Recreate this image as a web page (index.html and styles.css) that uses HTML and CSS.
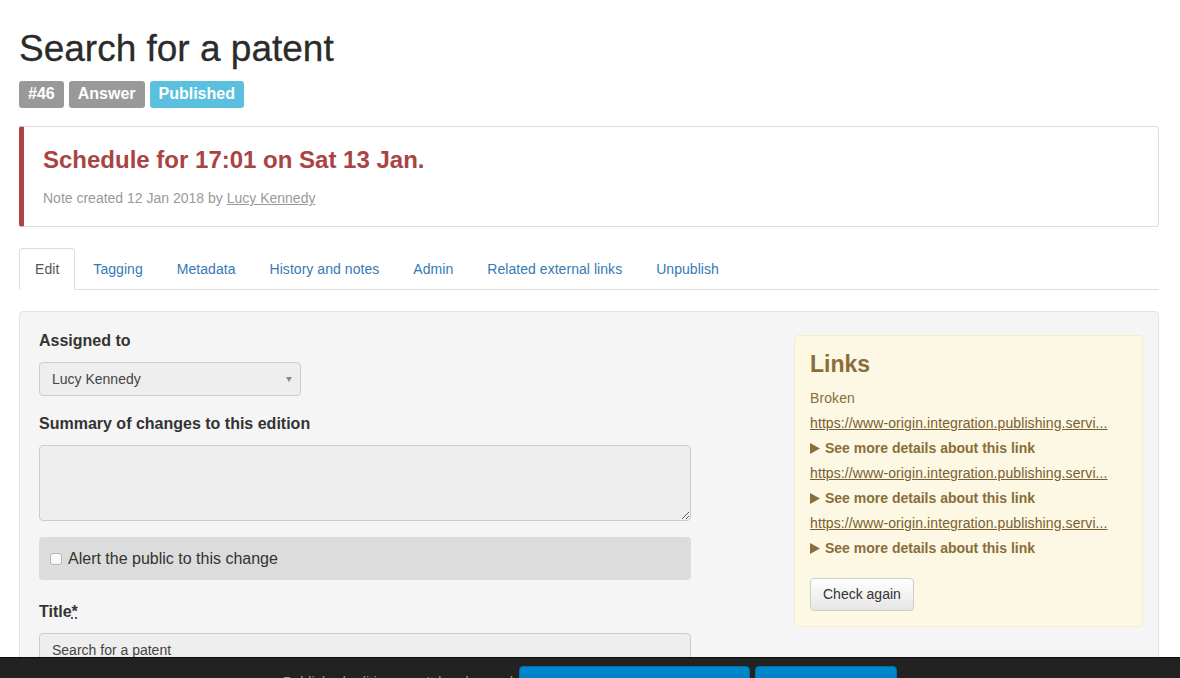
FILE: index.html
```html
<!DOCTYPE html>
<html lang="en">
<head>
<meta charset="utf-8">
<title>Search for a patent</title>
<link rel="stylesheet" href="styles.css">
</head>
<body>
<div class="container">
  <h1 class="page-title">Search for a patent</h1>
  <div class="labels">
    <span class="label label-default">#46</span>
    <span class="label label-default">Answer</span>
    <span class="label label-info">Published</span>
  </div>

  <div class="callout">
    <h2 class="callout-title">Schedule for 17:01 on Sat 13 Jan.</h2>
    <p class="callout-note">Note created 12 Jan 2018 by <a href="#" class="muted-link">Lucy Kennedy</a></p>
  </div>

  <ul class="tabs">
    <li class="tab active"><a href="#">Edit</a></li>
    <li class="tab"><a href="#">Tagging</a></li>
    <li class="tab"><a href="#">Metadata</a></li>
    <li class="tab"><a href="#">History and notes</a></li>
    <li class="tab"><a href="#">Admin</a></li>
    <li class="tab"><a href="#">Related external links</a></li>
    <li class="tab"><a href="#">Unpublish</a></li>
  </ul>

  <div class="well">
    <div class="form-col">
      <div class="form-group">
        <label class="field-label">Assigned to</label>
        <div class="select">
          <span>Lucy Kennedy</span>
          <span class="caret"></span>
        </div>
      </div>
      <div class="form-group form-group-tight">
        <label class="field-label">Summary of changes to this edition</label>
        <textarea class="textarea" disabled></textarea>
      </div>
      <div class="check-panel">
        <span class="checkbox"></span>
        <span>Alert the public to this change</span>
      </div>
      <div class="form-group">
        <label class="field-label">Title<abbr title="required">*</abbr></label>
        <div class="input">Search for a patent</div>
      </div>
    </div>

    <aside class="links-box">
      <h3 class="links-title">Links</h3>
      <p class="links-line">Broken</p>
      <p class="links-line"><a href="#" class="links-url">https://www-origin.integration.publishing.servi...</a></p>
      <p class="links-line links-more"><svg class="tri" width="10" height="11" viewBox="0 0 10 11"><polygon points="0,0 10,5.5 0,11" fill="#8a6d3b"/></svg>See more details about this link</p>
      <p class="links-line"><a href="#" class="links-url">https://www-origin.integration.publishing.servi...</a></p>
      <p class="links-line links-more"><svg class="tri" width="10" height="11" viewBox="0 0 10 11"><polygon points="0,0 10,5.5 0,11" fill="#8a6d3b"/></svg>See more details about this link</p>
      <p class="links-line"><a href="#" class="links-url">https://www-origin.integration.publishing.servi...</a></p>
      <p class="links-line links-more"><svg class="tri" width="10" height="11" viewBox="0 0 10 11"><polygon points="0,0 10,5.5 0,11" fill="#8a6d3b"/></svg>See more details about this link</p>
      <button class="btn-default">Check again</button>
    </aside>
  </div>
</div>

<footer class="footer">
  <span class="footer-text">Published editions can't be changed</span>
  <button class="btn-primary btn-wide"></button>
  <button class="btn-primary btn-narrow"></button>
</footer>
</body>
</html>
```

FILE: styles.css
```css
* { box-sizing: border-box; }

html, body {
  margin: 0;
  padding: 0;
  background: #fff;
  color: #333;
  font-family: "Liberation Sans", Arial, sans-serif;
  font-size: 14px;
  line-height: 20px;
}

a { color: #337ab7; text-decoration: none; }

.container {
  width: 1140px;
  margin-left: 19px;
  padding-top: 28px;
  padding-bottom: 80px;
}

.page-title {
  margin: 0;
  font-size: 37px;
  line-height: 41px;
  font-weight: 400;
  color: #2b2b2b;
  -webkit-text-stroke: 0.3px #2b2b2b;
}

.labels {
  display: flex;
  gap: 5px;
  margin-top: 12px;
}

.label {
  display: inline-block;
  padding: 4px 9px 5px;
  font-size: 16px;
  line-height: 18px;
  font-weight: 700;
  color: #fff;
  border-radius: 3px;
}

.label-default { background: #999; }
.label-info { background: #5bc0de; }

.callout {
  margin-top: 18px;
  border: 1px solid #ddd;
  border-left: 5px solid #a94442;
  border-radius: 3px;
  padding: 20px 20px 18px 19px;
}

.callout-title {
  margin: 0;
  font-size: 24px;
  line-height: 25px;
  font-weight: 700;
  color: #a94442;
}

.callout-note {
  margin: 16px 0 0;
  color: #999;
  font-size: 14px;
  line-height: 20px;
}

.muted-link {
  color: #999;
  text-decoration: underline;
}

.tabs {
  display: flex;
  list-style: none;
  margin: 21px 0 0;
  padding: 0;
  border-bottom: 1px solid #ddd;
}

.tab {
  margin-right: 2px;
  margin-bottom: -1px;
}

.tab a {
  display: block;
  padding: 10px 15px;
  line-height: 20px;
  border: 1px solid transparent;
  border-radius: 4px 4px 0 0;
  color: #337ab7;
  letter-spacing: 0.05px;
}

.tab.active a {
  color: #555;
  background: #fff;
  border-color: #ddd #ddd transparent;
}

.well {
  margin-top: 21px;
  background: #f5f5f5;
  border: 1px solid #e3e3e3;
  border-radius: 4px;
  padding: 19px 15px 60px 19px;
  display: flex;
  justify-content: space-between;
  align-items: flex-start;
}

.form-col {
  width: 652px;
}

.form-group {
  margin-bottom: 18px;
}

.form-group-tight {
  margin-bottom: 16px;
}

.field-label {
  display: block;
  font-size: 16px;
  line-height: 20px;
  font-weight: 700;
  margin-bottom: 11px;
  color: #333;
}

.field-label abbr {
  text-decoration: underline dotted;
  cursor: help;
}

.select {
  width: 262px;
  height: 34px;
  margin-top: 1px;
  display: flex;
  align-items: center;
  justify-content: space-between;
  padding: 0 8px 0 12px;
  background: #eee;
  border: 1px solid #ccc;
  border-radius: 4px;
  font-size: 14px;
  color: #444;
}

.caret {
  width: 0;
  height: 0;
  border-left: 3.5px solid transparent;
  border-right: 3.5px solid transparent;
  border-top: 5px solid #888;
  margin-top: 1px;
}

.textarea {
  display: block;
  width: 652px;
  height: 76px;
  background: #eee;
  border: 1px solid #ccc;
  border-radius: 4px;
  resize: vertical;
  margin: 0;
  font-family: inherit;
}

.check-panel {
  display: flex;
  align-items: center;
  gap: 6px;
  height: 43px;
  padding: 0 11px 0 11px;
  background: #dcdcdc;
  border-radius: 4px;
  margin-bottom: 22px;
  font-size: 16px;
  line-height: 23px;
  color: #333;
}

.checkbox {
  width: 12px;
  height: 12px;
  border: 1px solid #b5b5b5;
  border-radius: 3px;
  background: #fafafa;
  flex: none;
}

.input {
  width: 652px;
  height: 34px;
  padding: 6px 12px;
  background: #eee;
  border: 1px solid #ccc;
  border-radius: 4px;
  font-size: 14px;
  line-height: 20px;
  color: #444;
}

.links-box {
  width: 349px;
  margin-top: 4px;
  background: #fcf8e3;
  border: 1px solid #faebcc;
  border-radius: 4px;
  padding: 16px 15px 15px 15px;
  color: #8a6d3b;
}

.links-title {
  margin: 0 0 11px;
  font-size: 23px;
  line-height: 25px;
  font-weight: 700;
  color: #8a6d3b;
}

.links-line {
  margin: 0 0 5px;
  font-size: 14px;
  line-height: 20px;
  white-space: nowrap;
  letter-spacing: 0.1px;
}

.links-url {
  color: #7a5e31;
  text-decoration: underline;
}

.links-more {
  display: flex;
  align-items: center;
  font-weight: 700;
  letter-spacing: 0;
}

.tri {
  margin: 0 5px 0 0;
  flex: none;
}

.btn-default {
  margin-top: 15px;
  display: inline-block;
  padding: 6px 12px;
  font-family: inherit;
  font-size: 14px;
  line-height: 19px;
  color: #333;
  background: linear-gradient(#fff, #e6e6e6);
  border: 1px solid #ccc;
  border-radius: 4px;
}

.footer {
  position: fixed;
  left: 0;
  right: 0;
  bottom: -30px;
  height: 51px;
  background: #222;
  border-top: 1px solid #0c0c0c;
  display: flex;
  justify-content: center;
  align-items: flex-start;
  gap: 5px;
  padding-top: 8px;
}

.footer-text {
  color: #999;
  font-size: 14px;
  line-height: 20px;
  margin-top: 6px;
  margin-right: 1px;
  letter-spacing: 0.2px;
}

.btn-primary {
  height: 34px;
  padding: 6px 12px;
  font-family: inherit;
  font-size: 14px;
  line-height: 20px;
  color: #fff;
  background: linear-gradient(#0088cc, #0077b8);
  border: 1px solid #0070ad;
  border-radius: 4px;
}

.btn-wide { width: 231px; }
.btn-narrow { width: 142px; }
```
